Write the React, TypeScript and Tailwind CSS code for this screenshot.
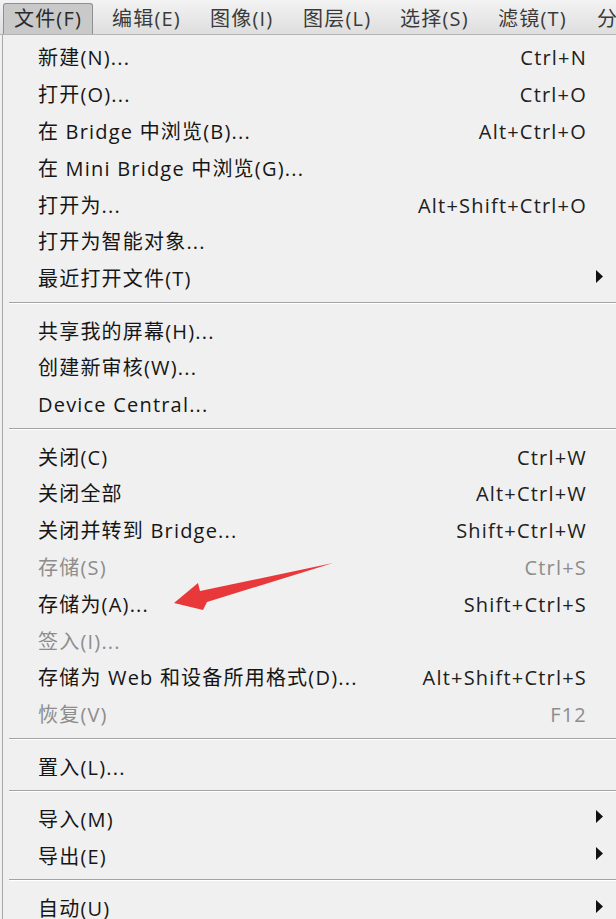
import React from 'react';

type Item =
  | { kind: 'sep' }
  | { kind: 'item'; label: string; shortcut?: string; sub?: boolean; disabled?: boolean };

// widths picked so each label lands where the reference has it
const menuBar = [
  { label: '编辑(E)', w: 'w-[98px]' },
  { label: '图像(I)', w: 'w-[93px]' },
  { label: '图层(L)', w: 'w-[97px]' },
  { label: '选择(S)', w: 'w-[98px]' },
  { label: '滤镜(T)', w: 'w-[99px]' },
  { label: '分', w: 'w-[60px]' },
];

const items: Item[] = [
  { kind: 'item', label: '新建(N)...', shortcut: 'Ctrl+N' },
  { kind: 'item', label: '打开(O)...', shortcut: 'Ctrl+O' },
  { kind: 'item', label: '在 Bridge 中浏览(B)...', shortcut: 'Alt+Ctrl+O' },
  { kind: 'item', label: '在 Mini Bridge 中浏览(G)...' },
  { kind: 'item', label: '打开为...', shortcut: 'Alt+Shift+Ctrl+O' },
  { kind: 'item', label: '打开为智能对象...' },
  { kind: 'item', label: '最近打开文件(T)', sub: true },
  { kind: 'sep' },
  { kind: 'item', label: '共享我的屏幕(H)...' },
  { kind: 'item', label: '创建新审核(W)...' },
  { kind: 'item', label: 'Device Central...' },
  { kind: 'sep' },
  { kind: 'item', label: '关闭(C)', shortcut: 'Ctrl+W' },
  { kind: 'item', label: '关闭全部', shortcut: 'Alt+Ctrl+W' },
  { kind: 'item', label: '关闭并转到 Bridge...', shortcut: 'Shift+Ctrl+W' },
  { kind: 'item', label: '存储(S)', shortcut: 'Ctrl+S', disabled: true },
  { kind: 'item', label: '存储为(A)...', shortcut: 'Shift+Ctrl+S' },
  { kind: 'item', label: '签入(I)...', disabled: true },
  { kind: 'item', label: '存储为 Web 和设备所用格式(D)...', shortcut: 'Alt+Shift+Ctrl+S' },
  { kind: 'item', label: '恢复(V)', shortcut: 'F12', disabled: true },
  { kind: 'sep' },
  { kind: 'item', label: '置入(L)...' },
  { kind: 'sep' },
  { kind: 'item', label: '导入(M)', sub: true },
  { kind: 'item', label: '导出(E)', sub: true },
  { kind: 'sep' },
  { kind: 'item', label: '自动(U)', sub: true },
];

const SubArrow = () => (
  <svg width="7" height="13" viewBox="0 0 7 13" className="block">
    <polygon points="0,0 7,6.5 0,13" fill="#111" />
  </svg>
);

export default function App() {
  return (
    <div
      className="relative h-[919px] w-[616px] overflow-hidden bg-[#f0f0f0] text-[20px] tracking-[1.2px]"
      style={{ fontFamily: '"Open Sans", "Noto Sans CJK SC", sans-serif' }}
    >
      {/* menu bar */}
      <div className="flex h-[35px] items-stretch border-b border-[#b4b4b4] bg-gradient-to-b from-[#f3f3f3] to-[#dedede] pl-[3px] pt-[3px]">
        <div className="flex w-[90px] shrink-0 items-center justify-center rounded-t-[3px] border border-b-0 border-[#8f8f8f] bg-[#c9c9c9] text-[#2a2a2a]">
          文件(F)
        </div>
        {menuBar.map((m) => (
          <div key={m.label} className={`flex shrink-0 items-center pl-[19px] text-[#3a3a3a] ${m.w}`}>
            {m.label}
          </div>
        ))}
      </div>

      {/* menu body */}
      <div className="ml-[2px] border-l border-[#a8a8a8] pt-[5px]">
        {items.map((it, i) =>
          it.kind === 'sep' ? (
            <div key={i} className="flex h-[15.6px] flex-col pl-[6px] pt-[4px]">
              <div className="h-px bg-[#a3a3a3]" />
              <div className="h-px bg-white" />
            </div>
          ) : (
            <div key={i} className="flex h-[36.8px] items-center pl-[35px] pr-[29px]">
              <span className={it.disabled ? 'text-[#8d8d8d]' : 'text-[#161616]'}>{it.label}</span>
              <span className="flex-1" />
              {it.shortcut && (
                <span className={it.disabled ? 'text-[#8d8d8d]' : 'text-[#202020]'}>{it.shortcut}</span>
              )}
              {it.sub && (
                <span className="-mr-[16px] -mt-[6px]">
                  <SubArrow />
                </span>
              )}
            </div>
          )
        )}
      </div>

      {/* red annotation arrow */}
      <svg className="pointer-events-none absolute left-0 top-0" width="616" height="919">
        <polygon points="174,603 198,583 200,591 333,563 207,602 203,610" fill="#e8383a" />
      </svg>
    </div>
  );
}
